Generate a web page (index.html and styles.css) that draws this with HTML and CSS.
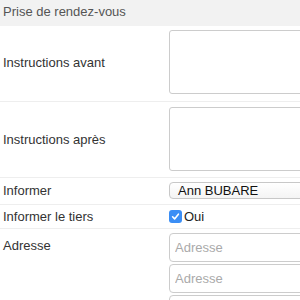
FILE: index.html
```html
<!DOCTYPE html>
<html lang="fr">
<head>
  <meta charset="UTF-8">
  <title>Prise de rendez-vous</title>
  <link rel="stylesheet" href="styles.css">
</head>
<body>

  <div class="panel">
    <div class="panel-title">Prise de rendez-vous</div>

    <div class="row row-tall">
      <label class="label">Instructions avant</label>
      <div class="field"><textarea class="area"></textarea></div>
    </div>

    <div class="row row-tall">
      <label class="label">Instructions après</label>
      <div class="field"><textarea class="area"></textarea></div>
    </div>

    <div class="row row-select">
      <label class="label">Informer</label>
      <div class="field"><div class="select">Ann BUBARE</div></div>
    </div>

    <div class="row row-check">
      <label class="label">Informer le tiers</label>
      <div class="field">
        <span class="check">
          <span class="box">
            <svg width="9" height="9" viewBox="0 0 9 9"><path d="M1.6 4.8 L3.6 6.9 L7.4 2.2" fill="none" stroke="#fff" stroke-width="1.6" stroke-linecap="round" stroke-linejoin="round"/></svg>
          </span>
          Oui
        </span>
      </div>
    </div>

    <div class="row row-address">
      <label class="label">Adresse</label>
      <div class="field stack">
        <input class="input" placeholder="Adresse">
        <input class="input" placeholder="Adresse">
        <input class="input" placeholder="">
      </div>
    </div>
  </div>

</body>
</html>
```

FILE: styles.css
```css
body {
  margin: 0;
  padding: 0;
  overflow: hidden;
  background: #fff;
  font-family: "Liberation Sans", Arial, sans-serif;
  font-size: 13px;
  color: #333;
}

.panel {
  width: 440px;
}

.panel-title {
  height: 26px;
  line-height: 24px;
  padding-left: 3px;
  background: #f2f2f2;
  color: #555;
}

.row {
  display: grid;
  grid-template-columns: 169px 1fr;
  align-items: center;
  border-bottom: 1px solid #eee;
}

.label {
  padding-left: 3px;
}

.row-tall {
  padding: 4px 0 7px;
}

.row-tall + .row-tall {
  padding: 5px 0 6px;
}

.area {
  display: block;
  box-sizing: border-box;
  width: 100%;
  height: 64px;
  margin: 0;
  border: 1px solid #ccc;
  border-radius: 3px;
  resize: none;
}

.row-select {
  padding: 4px 0 5px;
}

.select {
  box-sizing: border-box;
  height: 17px;
  line-height: 15px;
  padding-left: 8px;
  border: 1px solid #c8c8c8;
  border-radius: 4px;
  background: linear-gradient(#fff, #f4f4f4);
  color: #111;
}

.row-check {
  padding: 0;
  height: 23px;
}

.check {
  display: flex;
  align-items: center;
  gap: 2px;
  color: #222;
}

.box {
  display: inline-flex;
  align-items: center;
  justify-content: center;
  width: 13px;
  height: 13px;
  border-radius: 3px;
  background: #3b8ef5;
}

.row-address {
  align-items: start;
  padding-top: 4px;
  border-bottom: none;
}

.row-address .label {
  padding-top: 5px;
}

.stack {
  display: flex;
  flex-direction: column;
  gap: 2px;
}

.input {
  box-sizing: border-box;
  height: 29px;
  margin: 0;
  padding: 0 5px;
  border: 1px solid #ccc;
  border-radius: 4px;
  font-family: inherit;
  font-size: 13px;
  color: #333;
}

.input::placeholder {
  color: #aaa;
}
```
